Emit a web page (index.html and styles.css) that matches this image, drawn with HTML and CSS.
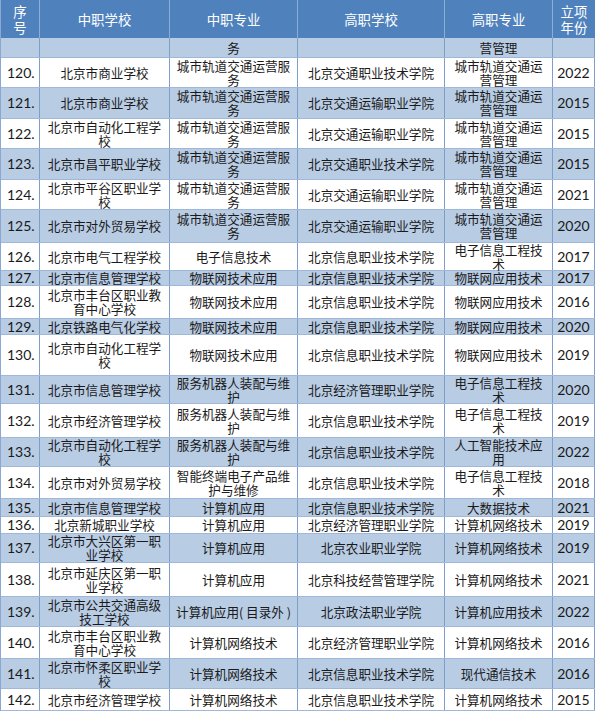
FILE: index.html
```html
<!DOCTYPE html>
<html lang="zh-CN">
<head>
<meta charset="utf-8">
<title>贯通培养项目表</title>
<link rel="stylesheet" href="styles.css">
</head>
<body>
<div class="table">
  <div class="row head">
    <div class="cell"><span class="w1">序号</span></div>
    <div class="cell">中职学校</div>
    <div class="cell">中职专业</div>
    <div class="cell">高职学校</div>
    <div class="cell">高职专业</div>
    <div class="cell"><span class="w2">立项年份</span></div>
  </div>
  <div class="row alt h20">
    <div class="cell num"></div><div class="cell"></div><div class="cell">务</div><div class="cell"></div><div class="cell">营管理</div><div class="cell num"></div>
  </div>
  <div class="row h30">
    <div class="cell num">120.</div><div class="cell">北京市商业学校</div><div class="cell">城市轨道交通运营服务</div><div class="cell">北京交通职业技术学院</div><div class="cell">城市轨道交通运营管理</div><div class="cell num">2022</div>
  </div>
  <div class="row alt h31">
    <div class="cell num">121.</div><div class="cell">北京市商业学校</div><div class="cell">城市轨道交通运营服务</div><div class="cell">北京交通运输职业学院</div><div class="cell">城市轨道交通运营管理</div><div class="cell num">2015</div>
  </div>
  <div class="row h30">
    <div class="cell num">122.</div><div class="cell">北京市自动化工程学校</div><div class="cell">城市轨道交通运营服务</div><div class="cell">北京交通运输职业学院</div><div class="cell">城市轨道交通运营管理</div><div class="cell num">2015</div>
  </div>
  <div class="row alt h31">
    <div class="cell num">123.</div><div class="cell">北京市昌平职业学校</div><div class="cell">城市轨道交通运营服务</div><div class="cell">北京交通职业技术学院</div><div class="cell">城市轨道交通运营管理</div><div class="cell num">2015</div>
  </div>
  <div class="row h30">
    <div class="cell num">124.</div><div class="cell">北京市平谷区职业学校</div><div class="cell">城市轨道交通运营服务</div><div class="cell">北京交通运输职业学院</div><div class="cell">城市轨道交通运营管理</div><div class="cell num">2021</div>
  </div>
  <div class="row alt h33">
    <div class="cell num">125.</div><div class="cell">北京市对外贸易学校</div><div class="cell">城市轨道交通运营服务</div><div class="cell">北京交通运输职业学院</div><div class="cell">城市轨道交通运营管理</div><div class="cell num">2020</div>
  </div>
  <div class="row h28">
    <div class="cell num">126.</div><div class="cell">北京市电气工程学校</div><div class="cell">电子信息技术</div><div class="cell">北京信息职业技术学院</div><div class="cell">电子信息工程技术</div><div class="cell num">2017</div>
  </div>
  <div class="row alt h15">
    <div class="cell num">127.</div><div class="cell">北京市信息管理学校</div><div class="cell">物联网技术应用</div><div class="cell">北京信息职业技术学院</div><div class="cell">物联网应用技术</div><div class="cell num">2017</div>
  </div>
  <div class="row h33">
    <div class="cell num">128.</div><div class="cell">北京市丰台区职业教育中心学校</div><div class="cell">物联网技术应用</div><div class="cell">北京信息职业技术学院</div><div class="cell">物联网应用技术</div><div class="cell num">2016</div>
  </div>
  <div class="row alt h16">
    <div class="cell num">129.</div><div class="cell">北京铁路电气化学校</div><div class="cell">物联网技术应用</div><div class="cell">北京信息职业技术学院</div><div class="cell">物联网应用技术</div><div class="cell num">2020</div>
  </div>
  <div class="row h41">
    <div class="cell num">130.</div><div class="cell">北京市自动化工程学校</div><div class="cell">物联网技术应用</div><div class="cell">北京信息职业技术学院</div><div class="cell">物联网应用技术</div><div class="cell num">2019</div>
  </div>
  <div class="row alt h28">
    <div class="cell num">131.</div><div class="cell">北京市信息管理学校</div><div class="cell">服务机器人装配与维护</div><div class="cell">北京经济管理职业学院</div><div class="cell">电子信息工程技术</div><div class="cell num">2020</div>
  </div>
  <div class="row h34">
    <div class="cell num">132.</div><div class="cell">北京市经济管理学校</div><div class="cell">服务机器人装配与维护</div><div class="cell">北京信息职业技术学院</div><div class="cell">电子信息工程技术</div><div class="cell num">2019</div>
  </div>
  <div class="row alt h29">
    <div class="cell num">133.</div><div class="cell">北京市自动化工程学校</div><div class="cell">服务机器人装配与维护</div><div class="cell">北京信息职业技术学院</div><div class="cell">人工智能技术应用</div><div class="cell num">2022</div>
  </div>
  <div class="row h32">
    <div class="cell num">134.</div><div class="cell">北京市对外贸易学校</div><div class="cell">智能终端电子产品维护与维修</div><div class="cell">北京信息职业技术学院</div><div class="cell">电子信息工程技术</div><div class="cell num">2018</div>
  </div>
  <div class="row alt h18">
    <div class="cell num">135.</div><div class="cell">北京市信息管理学校</div><div class="cell">计算机应用</div><div class="cell">北京信息职业技术学院</div><div class="cell">大数据技术</div><div class="cell num">2021</div>
  </div>
  <div class="row h17">
    <div class="cell num">136.</div><div class="cell">北京新城职业学校</div><div class="cell">计算机应用</div><div class="cell">北京经济管理职业学院</div><div class="cell">计算机网络技术</div><div class="cell num">2019</div>
  </div>
  <div class="row alt h29">
    <div class="cell num">137.</div><div class="cell">北京市大兴区第一职业学校</div><div class="cell">计算机应用</div><div class="cell">北京农业职业学院</div><div class="cell">计算机网络技术</div><div class="cell num">2019</div>
  </div>
  <div class="row h34">
    <div class="cell num">138.</div><div class="cell">北京市延庆区第一职业学校</div><div class="cell">计算机应用</div><div class="cell">北京科技经营管理学院</div><div class="cell">计算机网络技术</div><div class="cell num">2021</div>
  </div>
  <div class="row alt h30">
    <div class="cell num">139.</div><div class="cell">北京市公共交通高级技工学校</div><div class="cell">计算机应用( 目录外 )</div><div class="cell">北京政法职业学院</div><div class="cell">计算机应用技术</div><div class="cell num">2022</div>
  </div>
  <div class="row h32">
    <div class="cell num">140.</div><div class="cell">北京市丰台区职业教育中心学校</div><div class="cell">计算机网络技术</div><div class="cell">北京经济管理职业学院</div><div class="cell">计算机网络技术</div><div class="cell num">2016</div>
  </div>
  <div class="row alt h30">
    <div class="cell num">141.</div><div class="cell">北京市怀柔区职业学校</div><div class="cell">计算机网络技术</div><div class="cell">北京信息职业技术学院</div><div class="cell">现代通信技术</div><div class="cell num">2016</div>
  </div>
  <div class="row h22">
    <div class="cell num">142.</div><div class="cell">北京市经济管理学校</div><div class="cell">计算机网络技术</div><div class="cell">北京信息职业技术学院</div><div class="cell">计算机网络技术</div><div class="cell num">2015</div>
  </div>
</div>
</body>
</html>
```

FILE: styles.css
```css
html, body {
  margin: 0;
  padding: 0;
  background: #ffffff;
}

.table {
  width: 595px;
  font-family: "Noto Sans CJK SC", "Noto Sans", sans-serif;
  color: #1a1a1a;
  border-left: 1px solid #8aa8d2;
  box-sizing: border-box;
}

.row {
  display: grid;
  grid-template-columns: 39px 130px 128px 147px 108px 42px;
  box-sizing: border-box;
  border-bottom: 1px solid #9fb8da;
  background: #ffffff;
}

.row.alt {
  background: #b8cce4;
}

.row.head {
  height: 38px;
  background: #4f81bd;
  color: #ffffff;
  border-bottom: none;
}

.cell {
  display: flex;
  align-items: center;
  justify-content: center;
  text-align: center;
  padding: 0 5px;
  font-size: 12.6px;
  line-height: 14px;
  border-right: 1px solid #7e9fcb;
  min-width: 0;
  min-height: 0;
  overflow: visible;
}

.head .cell {
  font-size: 13.4px;
  line-height: 16px;
  padding: 0 2px;
  border-right: 1px solid rgba(255, 255, 255, 0.35);
}

.head .cell:last-child {
  border-right: none;
}

.w1 {
  width: 1.05em;
}

.w2 {
  width: 2.05em;
}

.cell.num {
  font-family: "Lato", "Noto Sans", sans-serif;
  font-size: 14px;
  padding: 0 2px;
}

.cell.num:first-child {
  justify-content: flex-start;
  padding-left: 6px;
}

.h15 { height: 15px; }
.h16 { height: 16px; }
.h17 { height: 17px; }
.h18 { height: 18px; }
.h20 { height: 20px; }
.h22 { height: 22px; }
.h26 { height: 26px; }
.h27 { height: 27px; }
.h28 { height: 28px; }
.h29 { height: 29px; }
.h30 { height: 30px; }
.h31 { height: 31px; }
.h32 { height: 32px; }
.h33 { height: 33px; }
.h34 { height: 34px; }
.h35 { height: 35px; }
.h36 { height: 36px; }
.h41 { height: 41px; }
```
